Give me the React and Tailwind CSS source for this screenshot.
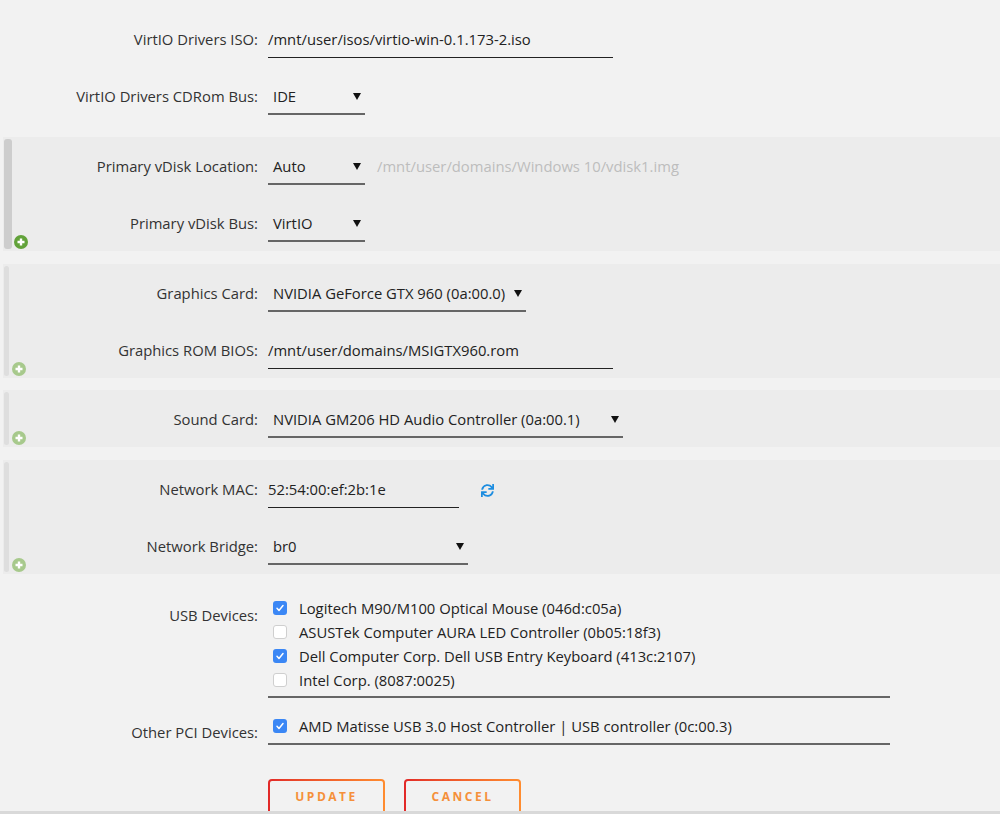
import React from "react";
import { FaSync } from "react-icons/fa";

function Arrow() {
  return (
    <svg width="8" height="8" viewBox="0 0 8 8" className="shrink-0">
      <polygon points="0,1 8,1 4,8" fill="#111" />
    </svg>
  );
}

function Plus({ active }) {
  return (
    <svg width="14" height="14" viewBox="0 0 14 14" className="shrink-0 ml-[2px]">
      <circle cx="7" cy="7" r="7" fill={active ? "#62a23a" : "#a7c98c"} />
      <path d="M7 3.5v7M3.5 7h7" stroke="#fff" strokeWidth="2.4" />
    </svg>
  );
}

function Row({ label, lw, children }) {
  return (
    <div className="flex items-start pt-[19px] pb-[9px]">
      <div className={lw + " shrink-0 text-right leading-[20px] pr-[10px] text-[#333]"}>{label}</div>
      {children}
    </div>
  );
}

function TextInput({ w, children }) {
  return (
    <div className={w + " leading-[20px] pb-[8px] border-b border-[#222] text-[#222] whitespace-nowrap"}>{children}</div>
  );
}

function Select({ w, children }) {
  return (
    <div className={w + " flex items-center justify-between leading-[20px] pl-[5px] pr-[4px] pb-[7px] border-b-2 border-[#666] text-[#222] whitespace-nowrap"}>
      <span>{children}</span>
      <Arrow />
    </div>
  );
}

function Section({ active, children }) {
  return (
    <div className="ml-[3px] flex bg-[#ececec]">
      <div className="w-[25px] shrink-0 flex items-end pl-[1px] py-[2px]">
        <div
          className={
            active
              ? "w-[8px] self-stretch rounded-[3px] bg-[#cdcdcd]"
              : "w-[5px] self-stretch rounded-[3px] bg-[#dedede] mr-[1px]"
          }
        />
        <Plus active={active} />
      </div>
      <div className="flex-1">{children}</div>
    </div>
  );
}

function Check({ checked }) {
  if (checked) {
    return (
      <div className="w-[14px] h-[14px] ml-[5px] mr-[12px] rounded-[3px] bg-[#3b87f5] flex items-center justify-center shrink-0">
        <svg width="10" height="10" viewBox="0 0 10 10">
          <path d="M2 5.2l2 2.2L8 2.6" stroke="#fff" strokeWidth="1.5" fill="none" strokeLinecap="round" strokeLinejoin="round" />
        </svg>
      </div>
    );
  }
  return <div className="w-[14px] h-[14px] ml-[5px] mr-[12px] rounded-[3px] bg-white border border-[#cfcfcf] shrink-0" />;
}

function Btn({ children, w }) {
  return (
    <div className={w + " h-[36px] rounded-[4px] p-[2px] bg-linear-to-r from-[#e22828] to-[#ff8c2f]"}>
      <div className="h-full w-full rounded-[2px] bg-[#f2f2f2] flex items-center justify-center text-[12px] font-bold tracking-[2.5px] text-[#f5903a]">
        {children}
      </div>
    </div>
  );
}

const OUT = "w-[268px]";
const IN = "w-[240px]";

export default function App() {
  const usb = [
    [true, "Logitech M90/M100 Optical Mouse (046d:c05a)"],
    [false, "ASUSTek Computer AURA LED Controller (0b05:18f3)"],
    [true, "Dell Computer Corp. Dell USB Entry Keyboard (413c:2107)"],
    [false, "Intel Corp. (8087:0025)"],
  ];
  return (
    <div className="w-[1000px] h-[814px] flex flex-col bg-[#f2f2f2] font-['Open_Sans',sans-serif] text-[14.8px] text-[#222]">
      <div className="h-[811px] overflow-hidden pt-[10px]">
        <Row label="VirtIO Drivers ISO:" lw={OUT}>
          <TextInput w="w-[345px]">/mnt/user/isos/virtio-win-0.1.173-2.iso</TextInput>
        </Row>
        <Row label="VirtIO Drivers CDRom Bus:" lw={OUT}>
          <Select w="w-[97px]">IDE</Select>
        </Row>

        <div className="mt-[13px]">
          <Section active>
            <Row label="Primary vDisk Location:" lw={IN}>
              <Select w="w-[97px]">Auto</Select>
              <div className="ml-[12px] leading-[20px] text-[#bdbdbd] whitespace-nowrap">/mnt/user/domains/Windows 10/vdisk1.img</div>
            </Row>
            <Row label="Primary vDisk Bus:" lw={IN}>
              <Select w="w-[97px]">VirtIO</Select>
            </Row>
          </Section>
        </div>

        <div className="mt-[13px]">
          <Section>
            <Row label="Graphics Card:" lw={IN}>
              <Select w="w-[258px]">NVIDIA GeForce GTX 960 (0a:00.0)</Select>
            </Row>
            <Row label="Graphics ROM BIOS:" lw={IN}>
              <TextInput w="w-[345px]">/mnt/user/domains/MSIGTX960.rom</TextInput>
            </Row>
          </Section>
        </div>

        <div className="mt-[12px]">
          <Section>
            <Row label="Sound Card:" lw={IN}>
              <Select w="w-[355px]">NVIDIA GM206 HD Audio Controller (0a:00.1)</Select>
            </Row>
          </Section>
        </div>

        <div className="mt-[13px]">
          <Section>
            <Row label="Network MAC:" lw={IN}>
              <TextInput w="w-[191px]">52:54:00:ef:2b:1e</TextInput>
              <FaSync className="ml-[22px] mt-[5px] text-[#1d8de0] w-[13px] h-[13px]" />
            </Row>
            <Row label="Network Bridge:" lw={IN}>
              <Select w="w-[200px]">br0</Select>
            </Row>
          </Section>
        </div>

        <div className="flex items-start mt-[13px] pt-[9px]">
          <div className={OUT + " shrink-0 text-right leading-[20px] pr-[10px] mt-[9px] text-[#333]"}>USB Devices:</div>
          <div className="w-[622px] pb-[4px] border-b-2 border-[#666]">
            {usb.map(([c, t]) => (
              <div key={t} className="flex items-center h-[24px] whitespace-nowrap">
                <Check checked={c} />
                <span>{t}</span>
              </div>
            ))}
          </div>
        </div>

        <div className="flex items-start mt-[16px]">
          <div className={OUT + " shrink-0 text-right leading-[20px] pr-[10px] mt-[8px] text-[#333]"}>Other PCI Devices:</div>
          <div className="w-[622px] pb-[5px] border-b-2 border-[#666]">
            <div className="flex items-center h-[24px] whitespace-nowrap">
              <Check checked />
              <span>AMD Matisse USB 3.0 Host Controller | USB controller (0c:00.3)</span>
            </div>
          </div>
        </div>

        <div className="ml-[268px] mt-[34px] flex gap-[19px]">
          <Btn w="w-[117px]">UPDATE</Btn>
          <Btn w="w-[117px]">CANCEL</Btn>
        </div>
      </div>
      <div className="h-[3px] bg-[#d9d9d9]" />
    </div>
  );
}
